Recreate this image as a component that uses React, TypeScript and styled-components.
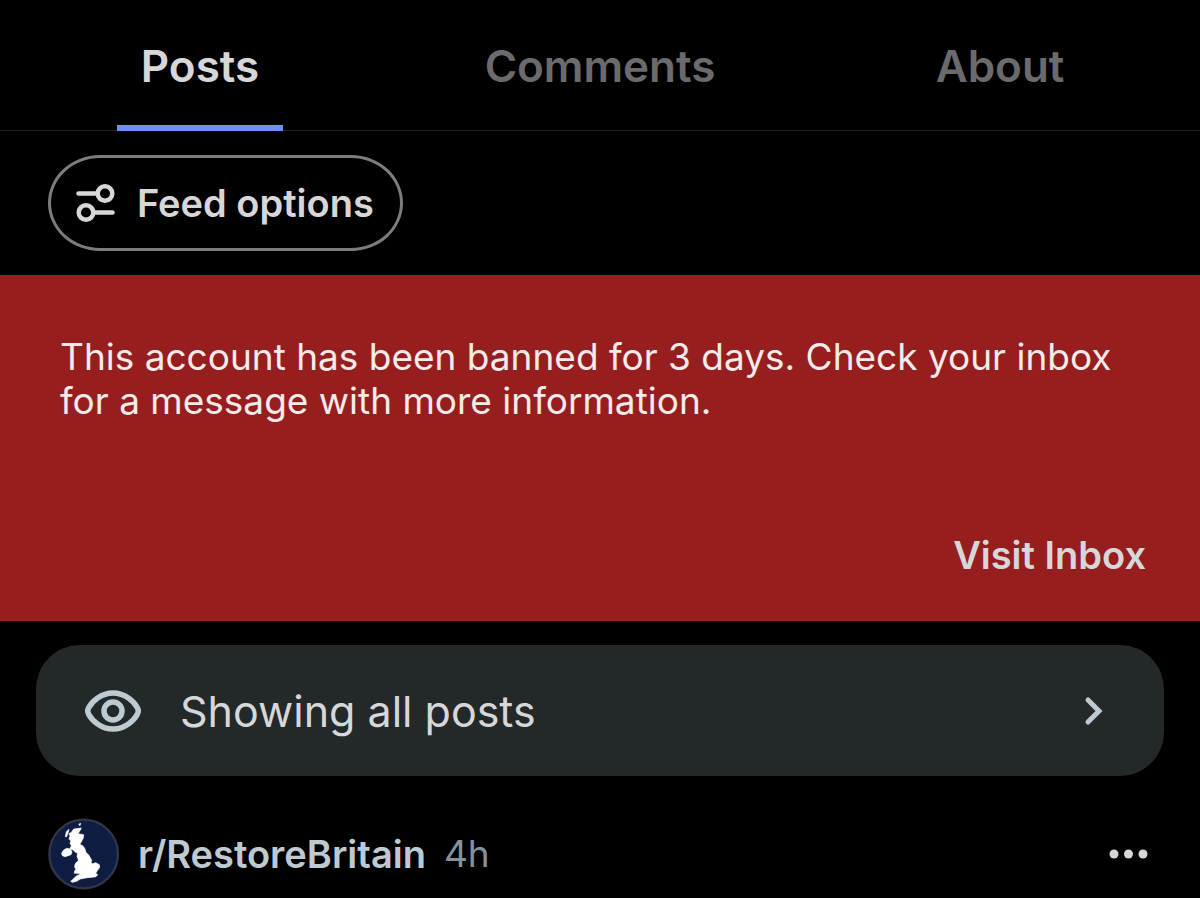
import React from "react";
import styled, { createGlobalStyle } from "styled-components";

const GlobalStyle = createGlobalStyle`
  *, *::before, *::after { box-sizing: border-box; }
  body {
    margin: 0;
    background: #000;
    color: #d7d7d9;
    font-family: Inter, "Liberation Sans", sans-serif;
  }
  button { font: inherit; color: inherit; background: none; border: 0; padding: 0; cursor: pointer; }
  a { color: inherit; text-decoration: none; }
  svg { display: block; flex: none; }
`;

const Page = styled.main`
  display: flex;
  flex-direction: column;
`;

const TabBar = styled.nav`
  display: grid;
  grid-template-columns: repeat(3, 1fr);
  justify-items: center;
  height: 131px;
  box-shadow: inset 0 -1px #232325;
`;

const Tab = styled.button<{ $active?: boolean }>`
  && {
    padding: 6px 24px 0;
    font-size: 44px;
    line-height: 52px;
    font-weight: 600;
    color: ${(p) => (p.$active ? "#d7d7d9" : "#6b6b6e")};
    border-bottom: 6px solid ${(p) => (p.$active ? "#6f8eff" : "transparent")};
  }
`;

const FilterRow = styled.div`
  display: flex;
  padding: 24px 48px;
`;

const Pill = styled.button`
  && {
    display: flex;
    align-items: center;
    gap: 20px;
    height: 96px;
    padding: 0 26px 0 24px;
    border: 3px solid #7d7d7e;
    border-radius: 52px / 48px;
    font-size: 38px;
    font-weight: 600;
  }
`;

const Banner = styled.section`
  display: flex;
  flex-direction: column;
  justify-content: space-between;
  min-height: 346px;
  padding: 60px 54px 44px 60px;
  background: #971e1f;
`;

const BannerText = styled.p`
  margin: 0;
  font-size: 37px;
  line-height: 44px;
  color: #f3eaea;
`;

const BannerLink = styled.a`
  align-self: flex-end;
  font-size: 38px;
  line-height: 44px;
  font-weight: 600;
`;

const Card = styled.button`
  && {
    display: flex;
    align-items: center;
    margin: 24px 36px 0;
    height: 131px;
    padding: 0 60px 0 48px;
    border-radius: 44px;
    background: #232829;
    font-size: 43px;
    text-align: left;
  }
`;

const CardLabel = styled.span`
  flex: 1;
  padding-left: 38px;
`;

const PostHeader = styled.header`
  display: flex;
  align-items: center;
  padding: 42px 50px 8px 48px;
  font-size: 38px;
  line-height: 44px;
`;

const Community = styled.a`
  margin-left: 18px;
  font-weight: 600;
  color: #bdcad2;
`;

const Age = styled.time`
  flex: 1;
  margin-left: 18px;
  font-size: 37px;
  color: #82939c;
`;

const FilterIcon = () => (
  <svg width="42" height="42" viewBox="0 0 42 42" fill="none" stroke="#d7d7d9" strokeWidth="4.500" strokeLinecap="round" aria-hidden="true">
    <circle cx="30" cy="11.500" r="7.300" />
    <path d="M3.500 11.500H22.700" />
    <circle cx="11" cy="30.500" r="7.300" />
    <path d="M18.300 30.500H37.500" />
  </svg>
);

const EyeIcon = () => (
  <svg width="58" height="44" viewBox="0 0 58 44" fill="none" stroke="#bdcad2" strokeWidth="5.500" aria-hidden="true">
    <path d="M29 4C41 4 50 12.500 53.300 18.600Q55.200 22 53.300 25.400C50 31.500 41 40 29 40S8 31.500 4.700 25.400Q2.800 22 4.700 18.600C8 12.500 17 4 29 4Z" />
    <circle cx="29" cy="22" r="9" />
  </svg>
);

const ChevronIcon = () => (
  <svg width="20" height="30" viewBox="0 0 20 30" fill="none" stroke="#bdcad2" strokeWidth="5" strokeLinecap="round" aria-hidden="true">
    <path d="M4 4L15 15L4 26" />
  </svg>
);

const MoreIcon = () => (
  <svg width="42" height="12" viewBox="0 0 42 12" fill="#d7d7d9" aria-hidden="true">
    <circle cx="6" cy="6" r="4.500" />
    <circle cx="20.500" cy="6" r="4.500" />
    <circle cx="35" cy="6" r="4.500" />
  </svg>
);

const BritainAvatar = () => (
  <svg width="72" height="72" viewBox="24 24 216 216" aria-hidden="true">
    <circle cx="131" cy="132" r="103" fill="#101d42" stroke="#34344a" strokeWidth="7" />
    <g fill="#fff" stroke="#fff" strokeWidth="2" strokeLinejoin="round">
      <path d="M101 57L124 54L119 64L114 71L131 74L130 84L124 96L119 103L128 107L134 115L138 127L146 135L152 145L155 151L153 159L158 161L167 158L178 164L179 172L172 182L167 190L173 194L168 200L156 202L142 203L132 205L120 207L112 213L98 217L92 214L101 206L110 197L122 193L114 190L103 190L104 182L108 178L104 172L105 163L109 157L115 152L114 146L111 139L113 130L106 127L101 121L90 116L94 107L90 100L93 92L87 88L90 78L87 71L95 66Z" />
      <path d="M65 130L70 121L80 115L91 117L96 126L93 134L84 137L76 140L67 137Z" />
      <path d="M76 80L79 65L87 58L84 70L80 80Z" />
      <path d="M116 43L122 40L120 47Z" />
    </g>
  </svg>
);

export default function App() {
  return (
    <>
      <GlobalStyle />
      <Page>
        <TabBar>
          <Tab $active>Posts</Tab>
          <Tab>Comments</Tab>
          <Tab>About</Tab>
        </TabBar>
        <FilterRow>
          <Pill>
            <FilterIcon />
            Feed options
          </Pill>
        </FilterRow>
        <Banner>
          <BannerText>
            This account has been banned for 3 days. Check your inbox for a message with more information.
          </BannerText>
          <BannerLink href="#inbox">Visit Inbox</BannerLink>
        </Banner>
        <Card>
          <EyeIcon />
          <CardLabel>Showing all posts</CardLabel>
          <ChevronIcon />
        </Card>
        <PostHeader>
          <BritainAvatar />
          <Community href="#community">r/RestoreBritain</Community>
          <Age>4h</Age>
          <button aria-label="More actions">
            <MoreIcon />
          </button>
        </PostHeader>
      </Page>
    </>
  );
}
